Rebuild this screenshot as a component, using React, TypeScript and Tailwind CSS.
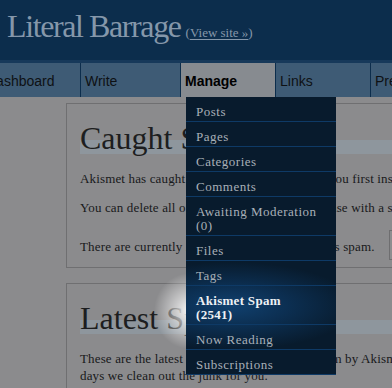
import React from 'react';

const tabs = [
  { label: 'Dashboard', cls: 'w-[98px] -ml-[18px] bg-[#3e5b75]' },
  { label: 'Write', cls: 'w-[99px] bg-[#3e5b75]' },
  { label: 'Manage', cls: 'w-[94px] bg-[#878b90] font-bold text-black' },
  { label: 'Links', cls: 'w-[94px] bg-[#3e5b75]' },
  { label: 'Presentation', cls: 'w-[120px] bg-[#3e5b75]' },
];

const menuItems = [
  { label: 'Posts' },
  { label: 'Pages' },
  { label: 'Categories' },
  { label: 'Comments' },
  { label: 'Awaiting Moderation', sub: '(0)' },
  { label: 'Files' },
  { label: 'Tags' },
  { label: 'Akismet Spam', sub: '(2541)', active: true },
  { label: 'Now Reading' },
  { label: 'Subscriptions' },
];

const headingBand =
  "bg-[linear-gradient(to_bottom,transparent_18px,#8e969d_18px,#8e969d_32px,transparent_32px)]";

export default function App() {
  return (
    <div className="relative w-[392px] h-[388px] overflow-hidden bg-[#8b8b8d] font-['Liberation_Serif','Times_New_Roman',serif]">
      {/* Header */}
      <div className="h-[60px] bg-[#0c2d4c] pl-[7px] pt-[10px] flex items-baseline gap-[5px] whitespace-nowrap">
        <h1 className="text-[32px] leading-[33px] text-[#8597aa] tracking-[-1.4px]">Literal Barrage</h1>
        <span className="text-[13px] text-[#8597aa]">
          (<span className="underline underline-offset-2">View site »</span>)
        </span>
      </div>

      {/* Nav */}
      <div className="h-[37px] bg-[#0c2d4c] border-t-[3px] border-[#17395a] flex gap-px whitespace-nowrap font-['Liberation_Sans',Arial,sans-serif] text-[14px] text-[#0e1114]">
        {tabs.map((t) => (
          <div key={t.label} className={`shrink-0 h-[34px] pl-[4px] pt-[2px] flex items-center ${t.cls}`}>
            {t.label}
          </div>
        ))}
      </div>

      {/* Content */}
      <div className="relative">
        <div className="ml-[66px] mt-[6px] w-[420px] border border-[#6f6f71] pb-[7px] text-[#18191b] text-[13px] tracking-[0.15px]">
          <h2 className={`ml-[13px] mt-[18px] text-[32px] leading-[32px] font-normal tracking-normal text-[#1d1e20] whitespace-nowrap ${headingBand}`}>
            Caught Spam
          </h2>
          <p className="ml-[13px] mt-[16px] leading-[18px] whitespace-nowrap">
            Akismet has caught <strong>2,541 spam</strong> for you since you first installed it.
          </p>
          <p className="ml-[13px] mt-[11px] leading-[18px] whitespace-nowrap">
            You can delete all of the spam from your database with a single click.
          </p>
          <div className="ml-[13px] mt-[13px] h-[30px] flex items-center gap-[14px] whitespace-nowrap">
            <span className="pt-[3px]">There are currently 2541 comments identified as spam.</span>
            <button className="h-[30px] px-[10px] border border-[#6e6e70] bg-[#8d8d8f] text-[#18191b]">
              Delete all
            </button>
          </div>
        </div>

        <div className="ml-[66px] mt-[15px] w-[420px] border border-[#6f6f71] pb-[20px] text-[#18191b] text-[13px] tracking-[0.15px]">
          <h2 className={`ml-[13px] mt-[18px] text-[32px] leading-[32px] font-normal tracking-normal text-[#1d1e20] whitespace-nowrap ${headingBand}`}>
            Latest Spam
          </h2>
          <p className="ml-[13px] mt-[16px] leading-[17px] whitespace-nowrap">
            These are the latest comments identified as spam by Akismet. Every 15
            <br />
            days we clean out the junk for you.
          </p>
        </div>

        {/* spotlight glow outside the menu */}
        <div className="absolute left-[150px] top-[168px] w-[80px] h-[80px] bg-[radial-gradient(ellipse_36px_38px_at_center,rgba(255,255,255,0.95)_0%,rgba(255,255,255,0.55)_40%,rgba(255,255,255,0)_100%)]" />
      </div>

      {/* Dropdown menu */}
      <div className="absolute left-[186px] top-[97px] w-[150px] bg-[#081b2d] overflow-hidden z-20 text-[13px] leading-[14px] text-[#a8b0b8] tracking-[0.5px]">
        <div className="absolute inset-0 bg-[radial-gradient(ellipse_125px_44px_at_45px_209px,rgba(17,66,114,0.95)_0%,rgba(14,58,102,0.65)_45%,rgba(8,27,45,0)_100%)]" />
        {menuItems.map((m) => (
          <div
            key={m.label}
            className={`relative border-b border-[#0e3a66] pt-[8px] pb-[2px] px-[10px] whitespace-nowrap ${m.active ? 'font-bold text-[#eef1f4] tracking-[0.3px]' : ''}`}
          >
            {m.label}
            {m.sub && (
              <>
                <br />
                {m.sub}
              </>
            )}
          </div>
        ))}
      </div>
    </div>
  );
}
